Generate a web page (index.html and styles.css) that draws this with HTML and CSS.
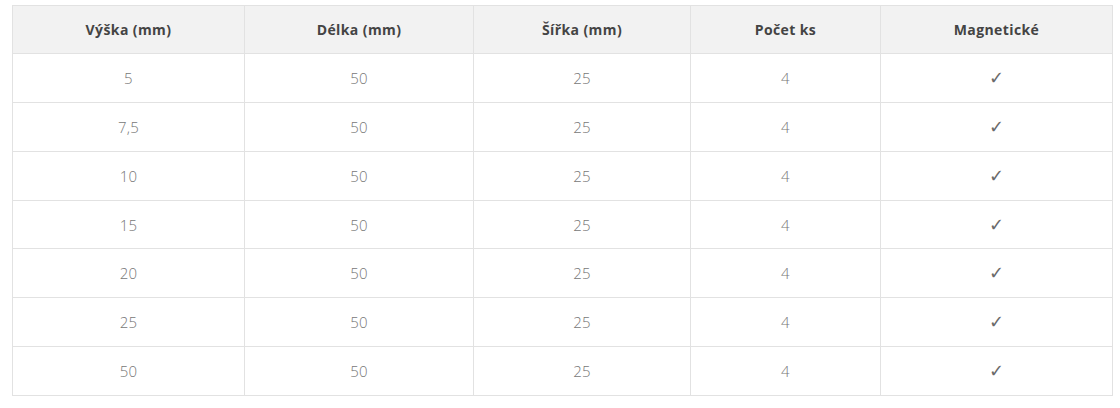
FILE: index.html
```html
<!DOCTYPE html>
<html lang="cs">
<head>
<meta charset="utf-8">
<title>Tabulka</title>
<link rel="stylesheet" href="styles.css">
</head>
<body>
<div class="wrap">
  <table class="spec">
    <colgroup>
      <col class="c1"><col class="c2"><col class="c3"><col class="c4"><col class="c5">
    </colgroup>
    <thead>
      <tr><th>Výška (mm)</th><th>Délka (mm)</th><th>Šířka (mm)</th><th>Počet ks</th><th>Magnetické</th></tr>
    </thead>
    <tbody>
      <tr><td>5</td><td>50</td><td>25</td><td>4</td><td class="chk">✓</td></tr>
      <tr><td>7,5</td><td>50</td><td>25</td><td>4</td><td class="chk">✓</td></tr>
      <tr><td>10</td><td>50</td><td>25</td><td>4</td><td class="chk">✓</td></tr>
      <tr><td>15</td><td>50</td><td>25</td><td>4</td><td class="chk">✓</td></tr>
      <tr><td>20</td><td>50</td><td>25</td><td>4</td><td class="chk">✓</td></tr>
      <tr><td>25</td><td>50</td><td>25</td><td>4</td><td class="chk">✓</td></tr>
      <tr><td>50</td><td>50</td><td>25</td><td>4</td><td class="chk">✓</td></tr>
    </tbody>
  </table>
</div>
</body>
</html>
```
FILE: styles.css
```css
html, body {
  margin: 0;
  padding: 0;
  background: #ffffff;
}
body {
  font-family: "Open Sans", "DejaVu Sans", sans-serif;
}
.wrap {
  padding: 5px 8px 0 12px;
}
.spec {
  border-collapse: collapse;
  table-layout: fixed;
  width: 1100px;
}
.c1 { width: 232px; }
.c2 { width: 229px; }
.c3 { width: 217px; }
.c4 { width: 190px; }
.c5 { width: 232px; }
.spec th,
.spec td {
  border: 1px solid #e2e2e2;
  text-align: center;
  padding: 0;
}
.spec th {
  background: #f2f2f2;
  color: #444444;
  font-size: 14px;
  font-weight: 700;
  letter-spacing: 0.4px;
  height: 47px;
}
.spec td {
  color: #777777;
  font-size: 15px;
  font-weight: 300;
  letter-spacing: 0.3px;
  height: 47.86px;
}
.spec td.chk {
  color: #6a6a6a;
  font-family: "DejaVu Sans", sans-serif;
  font-size: 18px;
  line-height: 1;
}
```
